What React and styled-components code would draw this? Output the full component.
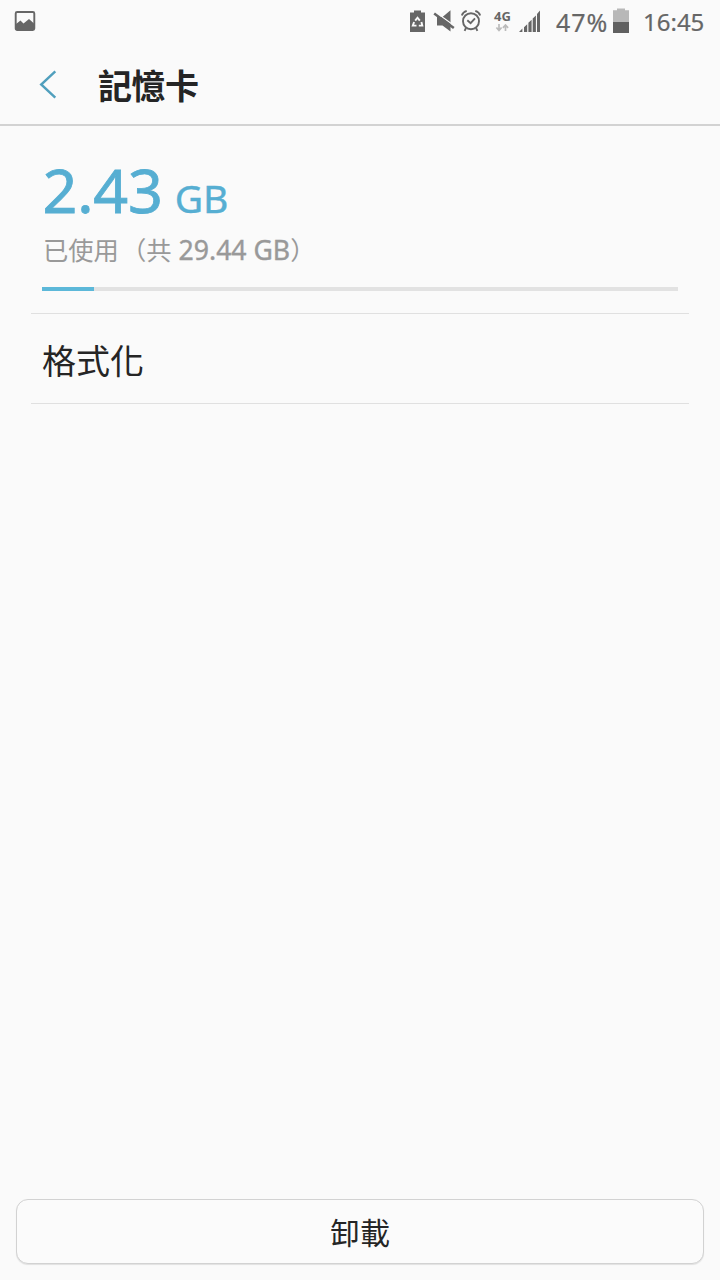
import React from 'react';
import styled, { createGlobalStyle } from 'styled-components';

const GlobalStyle = createGlobalStyle`
  * {
    box-sizing: border-box;
  }

  body {
    margin: 0;
    background: #fafafa;
    font-family: 'Noto Sans', 'Noto Sans CJK TC', sans-serif;
  }
`;

const Screen = styled.div`
  display: flex;
  flex-direction: column;
  width: 720px;
  height: 1280px;
  background: #fafafa;
`;

const StatusBar = styled.div`
  display: flex;
  justify-content: space-between;
  height: 44px;
  padding: 0 15px 0 14px;
  color: #666;
`;

const StatusGroup = styled.div`
  display: flex;
`;

const StatusIcon = styled.svg`
  flex: none;
  margin-left: ${(props) => props.$gap || 0}px;
`;

const StatusText = styled.span`
  margin-left: ${(props) => props.$gap}px;
  width: ${(props) => props.$width}px;
  font-size: ${(props) => props.$size || 24}px;
  line-height: 44px;
  letter-spacing: ${(props) => props.$spacing || 0}px;
  white-space: nowrap;
  -webkit-text-stroke: 0.2px #666;
`;

const Header = styled.header`
  display: flex;
  height: 82px;
  border-bottom: 2px solid #d2d2d2;
`;

const BackButton = styled.button`
  width: 98px;
  height: 80px;
  padding: 0;
  border: none;
  background: none;
  text-align: left;
`;

const Title = styled.h1`
  margin: 0;
  color: #252525;
  font-family: 'Noto Sans CJK TC', sans-serif;
  font-size: 34px;
  font-weight: 700;
  line-height: 81px;
  letter-spacing: -0.5px;
`;

const Usage = styled.section`
  display: flex;
  flex-direction: column;
  height: 187px;
  padding: 27px 42px 0;
`;

const Amount = styled.div`
  height: 77px;
  padding-left: 0.5px;
  color: #56aed2;
  font-size: 61px;
  line-height: 74px;
  letter-spacing: -0.2px;
  white-space: nowrap;
  -webkit-text-stroke: 0.8px #56aed2;
`;

const Unit = styled.span`
  margin-left: 12px;
  font-size: 39px;
  -webkit-text-stroke-width: 0.4px;
`;

const Total = styled.div`
  height: 40px;
  padding-left: 1px;
  color: #999;
  font-family: 'Noto Sans', 'Noto Sans CJK SC', sans-serif;
  font-size: 25.3px;
  line-height: 40px;
  white-space: nowrap;
`;

const TotalValue = styled.span`
  margin-left: 0.5px;
  font-size: 26.6px;
  -webkit-text-stroke: 0.4px #999;
`;

const Bracket = styled.span`
  margin-left: 2px;
`;

const Track = styled.div`
  height: 4px;
  margin-top: 17px;
  background: #e2e2e2;
`;

const Used = styled.div`
  height: 4px;
  background: #5cb8d9;
`;

const MenuItem = styled.div`
  height: 91px;
  margin: 0 31px;
  padding-left: 11px;
  border-top: 1px solid #e0e0e0;
  border-bottom: 1px solid #e0e0e0;
  color: #252525;
  font-family: 'Noto Sans CJK TC', sans-serif;
  font-size: 34px;
  line-height: 91px;
`;

const UnmountButton = styled.button`
  height: 65px;
  margin: auto 16px 16px;
  padding: 0 0 2px;
  border: 1.5px solid #d2d2d2;
  border-radius: 12px;
  background: #fbfbfb;
  box-shadow: 0 1px 1px rgba(0, 0, 0, 0.1);
  color: #252525;
  font-family: 'Noto Sans CJK TC', sans-serif;
  font-size: 30px;
  line-height: 60px;
`;

const usedGb = 2.43;
const totalGb = 29.44;

const PictureIcon = () => (
  <StatusIcon width="22" height="44" viewBox="0 0 22 44">
    <rect x="1.7" y="12" width="18.6" height="18" rx="1.5" fill="none" stroke="#666" strokeWidth="1.9" />
    <path d="M2 24 6.5 20.5 9.5 23.5 15 19 20 23.5V30H2Z" fill="#666" />
  </StatusIcon>
);

const BatterySaverIcon = () => (
  <StatusIcon width="16" height="44" viewBox="0 0 16 44">
    <path d="M0 12.5H4V10.5H11V12.5H15V32H0Z" fill="#666" />
    <g fill="none" stroke="#fafafa" strokeWidth="1.9">
      <path d="M5.2 20.6 7.5 17.7 9.8 20.6" />
      <path d="M11.4 22 12.3 25.6H8.8" />
      <path d="M6.5 25.6H2.8L4.1 22" />
    </g>
  </StatusIcon>
);

const MuteIcon = () => (
  <StatusIcon $gap={7} width="22" height="44" viewBox="0 0 22 44">
    <path d="M4 17H9.5L17.5 10.3V31.5L9.5 25.5H4Z" fill="#666" />
    <path d="M3 12.4 21 25.6" stroke="#fafafa" strokeWidth="1.2" />
    <path d="M1.2 13.5 20.8 28" stroke="#666" strokeWidth="2.5" />
  </StatusIcon>
);

const AlarmIcon = () => (
  <StatusIcon $gap={6} width="20" height="44" viewBox="0 0 20 44">
    <g fill="none" stroke="#666" strokeWidth="1.9">
      <circle cx="10" cy="21.2" r="8" />
      <path d="M6.3 20.2 9.6 23.2 14 18.4" />
      <path d="M.8 15.6Q1.8 12.2 5.7 10.9M19.2 15.6Q18.2 12.2 14.3 10.9" />
      <path d="M5 28 3.6 30.8M15 28 16.4 30.8" />
    </g>
  </StatusIcon>
);

const NetworkType = styled.div`
  display: flex;
  flex-direction: column;
  width: 20px;
  margin-left: 13px;
  padding-top: 9px;
  font-size: 13px;
  font-weight: 700;
  line-height: 15px;
`;

const DataArrows = () => (
  <svg width="20" height="8" viewBox="0 0 20 8">
    <path d="M5 0V6M2.4 3.5 5 6.4 7.6 3.5M11.5 7V1M8.9 3.8 11.5 1 14.1 3.8" fill="none" stroke="#bbb" strokeWidth="1.7" />
  </svg>
);

const SignalIcon = () => (
  <StatusIcon $gap={5} width="22" height="44" viewBox="0 0 22 44">
    <path d="M0 32 3.4 28.5V32ZM5 27.2 8.2 24.3V32H5ZM9.4 22.8 12.6 19.8V32H9.4ZM13.7 18.6 16.9 15.4V32H13.7ZM18 14 21 10.5V32H18Z" fill="#666" />
  </StatusIcon>
);

const BatteryIcon = () => (
  <StatusIcon width="16" height="44" viewBox="0 0 16 44">
    <path d="M0 10.2H4V8.5H12V10.2H16V22H0Z" fill="#b8b8b8" />
    <path d="M0 22H16V33H0Z" fill="#606060" />
  </StatusIcon>
);

const App = () => {
  return (
    <>
      <GlobalStyle />
      <Screen>
        <StatusBar>
          <PictureIcon />
          <StatusGroup>
            <BatterySaverIcon />
            <MuteIcon />
            <AlarmIcon />
            <NetworkType>
              4G
              <DataArrows />
            </NetworkType>
            <SignalIcon />
            <StatusText $gap={15} $width={57} $size={25} $spacing={0.9}>47%</StatusText>
            <BatteryIcon />
            <StatusText $gap={14} $width={62}>16:45</StatusText>
          </StatusGroup>
        </StatusBar>
        <Header>
          <BackButton aria-label="返回">
            <svg width="98" height="80" viewBox="0 0 98 80">
              <path d="M55.3 27.3 41.2 40.5 55.3 53.7" fill="none" stroke="#509fbd" strokeWidth="2.4" />
            </svg>
          </BackButton>
          <Title>記憶卡</Title>
        </Header>
        <Usage>
          <Amount>
            {usedGb}
            <Unit>GB</Unit>
          </Amount>
          <Total>
            已使用<Bracket>（</Bracket>共 <TotalValue>{totalGb} GB</TotalValue>）
          </Total>
          <Track>
            <Used style={{ width: `${(usedGb / totalGb) * 100}%` }} />
          </Track>
        </Usage>
        <MenuItem>格式化</MenuItem>
        <UnmountButton>卸載</UnmountButton>
      </Screen>
    </>
  );
};

export default App;
